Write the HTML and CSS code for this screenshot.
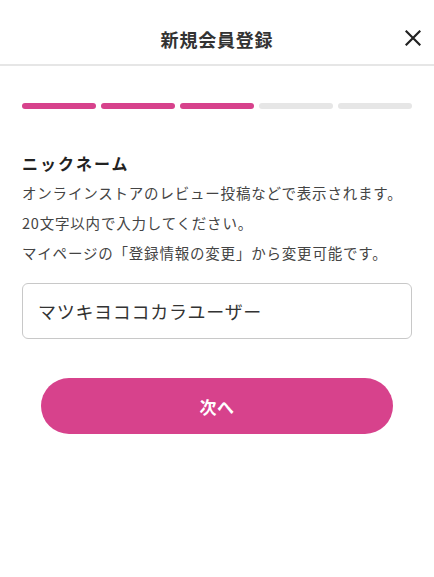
FILE: index.html
```html
<!DOCTYPE html>
<html lang="ja">
<head>
    <meta charset="UTF-8">
    <meta name="viewport" content="width=device-width, initial-scale=1.0">
    <title>新規会員登録</title>
    <link rel="stylesheet" href="styles.css">
</head>
<body>
    <header class="header">
        <h1 class="header-title">新規会員登録</h1>
        <button class="close-btn" type="button" aria-label="閉じる">
            <svg width="16" height="16" viewBox="0 0 16 16">
                <path d="M1.5 1.5 L14.5 14.5 M14.5 1.5 L1.5 14.5" stroke="#222" stroke-width="2.2" stroke-linecap="square" fill="none"/>
            </svg>
        </button>
    </header>

    <main class="container">
        <div class="steps">
            <span class="step done"></span>
            <span class="step done"></span>
            <span class="step done"></span>
            <span class="step"></span>
            <span class="step"></span>
        </div>

        <form class="nickname-form">
            <h2 class="field-title">ニックネーム</h2>
            <p class="field-note">
                オンラインストアのレビュー投稿などで表示されます。<br>
                20文字以内で入力してください。<br>
                マイページの「登録情報の変更」から変更可能です。
            </p>
            <input class="text-input" type="text" name="nickname" value="マツキヨココカラユーザー">
            <button class="next-btn" type="submit">次へ</button>
        </form>
    </main>
</body>
</html>
```

FILE: styles.css
```css
body {
    font-family: "Noto Sans CJK JP", "Noto Sans", sans-serif;
    background-color: #fff;
    color: #333;
    margin: 0;
    padding: 0;
}

.header {
    position: relative;
    height: 50px;
    padding-top: 14px;
    display: flex;
    justify-content: center;
    align-items: center;
    border-bottom: 2px solid #e6e6e6;
}

.header-title {
    margin: 0;
    font-size: 18px;
    font-weight: bold;
    letter-spacing: 0.8px;
    color: #333;
}

.close-btn {
    position: absolute;
    right: 10px;
    top: 27px;
    width: 22px;
    height: 22px;
    padding: 0;
    border: none;
    background: none;
    display: flex;
    align-items: center;
    justify-content: center;
}

.container {
    padding: 37px 22px 0;
}

.steps {
    display: flex;
    gap: 5px;
}

.step {
    flex: 1;
    height: 6px;
    border-radius: 3px;
    background: #e6e6e6;
}

    .step.done {
        background: #d7428c;
    }

.nickname-form {
    display: flex;
    flex-direction: column;
}

.field-title {
    margin: 42px 0 0;
    font-size: 16px;
    line-height: 24px;
    font-weight: bold;
    letter-spacing: 2px;
    color: #222;
}

.field-note {
    margin: 3px 0 0;
    font-size: 14.5px;
    line-height: 30px;
    letter-spacing: 0.8px;
    color: #444;
}

.text-input {
    margin-top: 15px;
    height: 56px;
    box-sizing: border-box;
    padding: 0 15px;
    border: 1px solid #c8c8c8;
    border-radius: 6px;
    font-family: inherit;
    font-size: 18px;
    letter-spacing: 0.7px;
    color: #333;
}

.next-btn {
    margin: 39px 19px 0;
    height: 56px;
    border: none;
    border-radius: 28px;
    background: #d7428c;
    color: #fff;
    font-family: inherit;
    font-size: 17px;
    font-weight: bold;
    letter-spacing: 0.5px;
    cursor: pointer;
}
```
